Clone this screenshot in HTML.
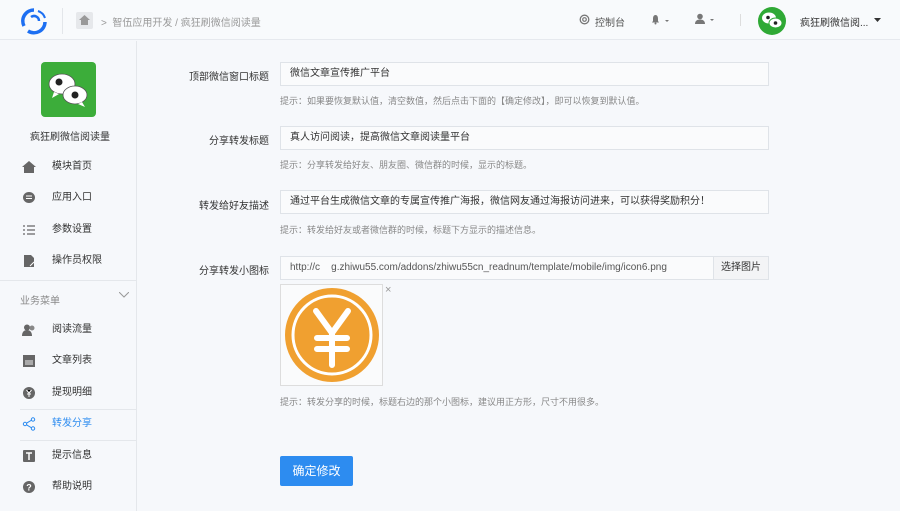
<!DOCTYPE html>
<html><head><meta charset="utf-8"><style>
*{margin:0;padding:0;box-sizing:border-box}
body{width:900px;height:511px;overflow:hidden;background:#f6f8fb;font-family:"Liberation Sans","Noto Sans CJK SC",sans-serif;font-size:10px;color:#333;position:relative}
.a{position:absolute}
.hdr{left:0;top:0;width:900px;height:40px;border-bottom:1px solid #e6e9ee;background:#f8fafc}
.side{left:0;top:41px;width:137px;height:470px;border-right:1px solid #e4e7eb}
.item{position:absolute;left:0;width:137px;height:20px;line-height:20px;font-size:10px;color:#333}
.item .ic{position:absolute;left:22px;top:3px;width:14px;height:14px}
.item span{position:absolute;left:52px}
.lbl{position:absolute;right:631px;font-size:10px;color:#333;text-align:right;white-space:nowrap}
.inp{position:absolute;left:280px;width:489px;height:24px;border:1px solid #dfe3e8;background:#fafbfc;line-height:22px;padding-left:9px;font-size:10px;color:#333;white-space:nowrap;overflow:hidden}
.hint{position:absolute;left:280px;font-size:9px;color:#888;white-space:nowrap}
</style></head><body>
<div class="a hdr"></div>
<svg class="a" style="left:19px;top:7px" width="30" height="28" viewBox="0 0 30 28"><path d="M15 3 A11 11 0 0 0 5 19" stroke="#1d6ff2" stroke-width="3.5" fill="none"/><path d="M9 24 A11 11 0 0 0 26 15" stroke="#1d6ff2" stroke-width="3.5" fill="none"/><path d="M19 4 A11 11 0 0 1 26 11" stroke="#1d6ff2" stroke-width="2" fill="none"/><path d="M12 10 A5 5 0 0 1 20 14" stroke="#1d6ff2" stroke-width="2.5" fill="none"/></svg>
<div class="a" style="left:62px;top:8px;width:1px;height:26px;background:#e3e6ea"></div>
<div class="a" style="left:76px;top:12px;width:17px;height:17px;background:#e6e8eb;border-radius:2px"></div>
<svg class="a" style="left:78px;top:14px" width="13" height="12" viewBox="0 0 13 12"><path d="M6.5 1L1 6h2v5h7V6h2z" fill="#999"/></svg>
<div class="a" style="left:101px;top:14px;color:#999;font-size:10px">&gt;&nbsp; 智伍应用开发 / 疯狂刷微信阅读量</div>
<svg class="a" style="left:579px;top:14px" width="11" height="11" viewBox="0 0 11 11"><circle cx="5.5" cy="5.5" r="4.3" fill="none" stroke="#777" stroke-width="1.3"/><circle cx="5.5" cy="5.5" r="1.8" fill="none" stroke="#777" stroke-width="1.2"/></svg>
<div class="a" style="left:595px;top:14px;color:#555;font-size:10px">控制台</div>
<svg class="a" style="left:651px;top:14px" width="20" height="11" viewBox="0 0 20 11"><path d="M4.5 1C2.5 1 2 3 2 5v2L1 8.5h7L7 7V5c0-2-.5-4-2.5-4z" fill="#777"/><circle cx="4.5" cy="9.5" r="1" fill="#777"/><path d="M14 6l2 2 2-2z" fill="#777"/></svg>
<svg class="a" style="left:694px;top:13px" width="22" height="12" viewBox="0 0 22 12"><circle cx="6" cy="3.5" r="2.8" fill="#777"/><path d="M1 11c0-3 2-4.5 5-4.5s5 1.5 5 4.5z" fill="#777"/><path d="M16 6l2 2 2-2z" fill="#777"/></svg>
<div class="a" style="left:740px;top:14px;width:1px;height:12px;background:#ddd"></div>
<div class="a" style="left:758px;top:7px;width:28px;height:28px;border-radius:50%;background:#2fa935"></div>
<svg class="a" style="left:761px;top:11px" width="22" height="20" viewBox="0 0 22 20"><ellipse cx="8" cy="7" rx="7" ry="5.5" fill="#fff"/><ellipse cx="14.5" cy="12" rx="6.5" ry="5" fill="#fff" stroke="#2fa935" stroke-width="1"/><circle cx="7" cy="6.5" r="1.8" fill="#222"/><circle cx="14.5" cy="12" r="1.8" fill="#222"/></svg>
<div class="a" style="left:800px;top:14px;font-size:10px;color:#333">疯狂刷微信阅...</div>
<svg class="a" style="left:874px;top:18px" width="7" height="5"><path d="M0 0h7L3.5 4z" fill="#333"/></svg>

<div class="a side"></div>
<div class="a" style="left:41px;top:62px;width:55px;height:55px;background:#3cad3a;border-radius:4px"></div>
<svg class="a" style="left:45px;top:70px" width="48" height="40" viewBox="0 0 48 40"><ellipse cx="17" cy="14" rx="13" ry="10" fill="#fff" stroke="#555" stroke-width=".8"/><path d="M9 22l-2 6 7-4z" fill="#fff"/><ellipse cx="30" cy="25" rx="12" ry="9" fill="#fff" stroke="#555" stroke-width=".8"/><path d="M37 32l3 5-7-3z" fill="#fff"/><circle cx="14" cy="12" r="3.5" fill="#222"/><circle cx="30" cy="25" r="3.5" fill="#222"/></svg>
<div class="a" style="left:30px;top:128px;font-size:10px;color:#333">疯狂刷微信阅读量</div>

<div class="item" style="top:157px"><svg class="ic" viewBox="0 0 14 14"><path d="M7 1L0 7h2v6h10V7h2z" fill="#666"/></svg><span>模块首页</span></div>
<div class="item" style="top:188px"><svg class="ic" viewBox="0 0 14 14"><ellipse cx="7" cy="6.5" rx="6" ry="5.5" fill="#666"/><path d="M4 5h6M4 7.5h6" stroke="#fff"/></svg><span>应用入口</span></div>
<div class="item" style="top:220px"><svg class="ic" viewBox="0 0 14 14"><path d="M1 3h2M5 3h8M1 7h2M5 7h8M1 11h2M5 11h8" stroke="#666" stroke-width="1.3"/></svg><span>参数设置</span></div>
<div class="item" style="top:251px"><svg class="ic" viewBox="0 0 14 14"><path d="M2 1h7l3 3v9H2z" fill="#666"/><path d="M8 12l4-4" stroke="#fff"/></svg><span>操作员权限</span></div>
<div class="a" style="left:0;top:280px;width:137px;height:1px;background:#e4e7eb"></div>
<div class="a" style="left:20px;top:292px;color:#888;font-size:10px">业务菜单</div>
<svg class="a" style="left:119px;top:292px" width="10" height="6"><path d="M0 0l5 5 5-5" stroke="#999" fill="none"/></svg>
<div class="item" style="top:320px"><svg class="ic" viewBox="0 0 14 14"><circle cx="5" cy="4.5" r="3" fill="#666"/><path d="M0 13c0-4 2-6 5-6s5 2 5 6z" fill="#666"/><circle cx="10" cy="5" r="2.5" fill="#888"/></svg><span>阅读流量</span></div>
<div class="item" style="top:351px"><svg class="ic" viewBox="0 0 14 14"><rect x="1" y="1" width="12" height="12" fill="#666"/><rect x="3" y="6" width="8" height="5" fill="#aaa"/></svg><span>文章列表</span></div>
<div class="item" style="top:383px"><svg class="ic" viewBox="0 0 14 14"><circle cx="7" cy="7" r="6" fill="#666"/><path d="M4.5 4l2.5 3 2.5-3M7 7v4M5 8h4" stroke="#fff"/></svg><span>提现明细</span></div>
<div class="a" style="left:20px;top:409px;width:117px;height:1px;background:#e4e7eb"></div>
<div class="item" style="top:414px;color:#2d8cf0"><svg class="ic" viewBox="0 0 14 14"><circle cx="11" cy="2.5" r="1.7" fill="none" stroke="#2d8cf0"/><circle cx="3" cy="7" r="1.7" fill="none" stroke="#2d8cf0"/><circle cx="11" cy="11.5" r="1.7" fill="none" stroke="#2d8cf0"/><path d="M4.5 6.2l5-3M4.5 7.8l5 3" stroke="#2d8cf0"/></svg><span>转发分享</span></div>
<div class="a" style="left:20px;top:440px;width:117px;height:1px;background:#e4e7eb"></div>
<div class="item" style="top:446px"><svg class="ic" viewBox="0 0 14 14"><rect x="1" y="1" width="12" height="12" rx="1" fill="#666"/><path d="M4 4h6M7 4v7" stroke="#fff" stroke-width="1.5"/></svg><span>提示信息</span></div>
<div class="item" style="top:477px"><svg class="ic" viewBox="0 0 14 14"><circle cx="7" cy="7" r="6" fill="#666"/><text x="7" y="10.5" font-size="9" text-anchor="middle" fill="#fff" font-family="Liberation Sans" font-weight="bold">?</text></svg><span>帮助说明</span></div>

<div class="lbl" style="top:68px">顶部微信窗口标题</div>
<div class="inp" style="top:62px">微信文章宣传推广平台</div>
<div class="hint" style="top:94px">提示：如果要恢复默认值，清空数值，然后点击下面的【确定修改】，即可以恢复到默认值。</div>
<div class="lbl" style="top:132px">分享转发标题</div>
<div class="inp" style="top:126px">真人访问阅读，提高微信文章阅读量平台</div>
<div class="hint" style="top:158px">提示：分享转发给好友、朋友圈、微信群的时候，显示的标题。</div>
<div class="lbl" style="top:197px">转发给好友描述</div>
<div class="inp" style="top:190px">通过平台生成微信文章的专属宣传推广海报，微信网友通过海报访问进来，可以获得奖励积分！</div>
<div class="hint" style="top:223px">提示：转发给好友或者微信群的时候，标题下方显示的描述信息。</div>
<div class="lbl" style="top:262px">分享转发小图标</div>
<div class="inp" style="top:256px;width:434px;color:#555">http://c&nbsp;&nbsp;&nbsp;&nbsp;g.zhiwu55.com/addons/zhiwu55cn_readnum/template/mobile/img/icon6.png</div>
<div class="inp" style="top:256px;left:713px;width:56px;padding:0;text-align:center;background:#f3f4f6">选择图片</div>
<div class="a" style="left:280px;top:284px;width:103px;height:102px;border:1px solid #ddd;background:#fafbfc"></div>
<svg class="a" style="left:284px;top:287px" width="96" height="96" viewBox="0 0 96 96"><circle cx="48" cy="48" r="47" fill="#f0a030"/><circle cx="48" cy="48" r="39" fill="none" stroke="#fff" stroke-width="3"/><path d="M32 24l16 22 16-22M48 46v32M33 51h30M33 62h30" stroke="#fff" stroke-width="6" stroke-linecap="round" fill="none"/></svg>
<div class="a" style="left:385px;top:284px;color:#999;font-size:11px">×</div>
<div class="hint" style="top:395px">提示：转发分享的时候，标题右边的那个小图标，建议用正方形，尺寸不用很多。</div>
<div class="a" style="left:280px;top:456px;width:73px;height:30px;background:#2d8cf0;border-radius:2px;color:#fff;font-size:12px;line-height:30px;text-align:center">确定修改</div>
</body></html>
